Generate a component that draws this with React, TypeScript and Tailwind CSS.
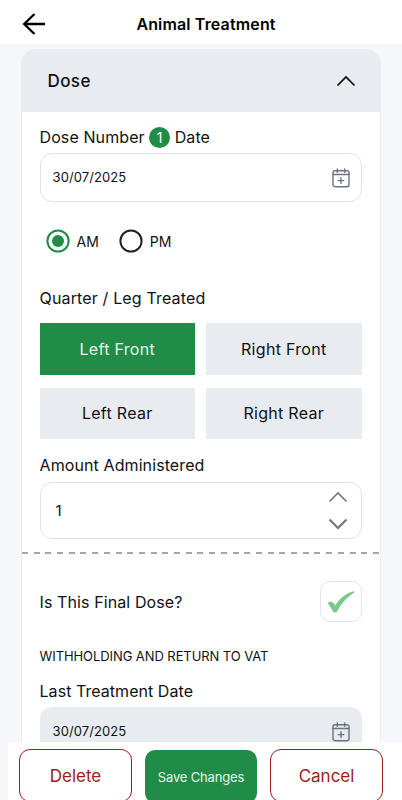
import { useState } from 'react';
import type { ReactNode } from 'react';

const quarters = ['Left Front', 'Right Front', 'Left Rear', 'Right Rear'];
const periods = ['AM', 'PM'];

function CalendarIcon() {
  return (
    <svg width="18" height="20" viewBox="0 0 18 20" fill="none" stroke="#6b7280" strokeWidth="1.4" strokeLinecap="round">
      <rect x="1" y="2.7" width="16" height="16" rx="2" />
      <path d="M1 6.5h16M5.3 1v3.4M12.7 1v3.4M9 9.8v5.6M6.2 12.6h5.6" />
    </svg>
  );
}

function Chevron({ up, className, width = 1.6 }: { up?: boolean; className?: string; width?: number }) {
  return (
    <svg width="20" height="12" viewBox="0 0 20 12" fill="none" stroke="currentColor" strokeWidth={width} className={className}>
      <path d={up ? 'M1.5 10.5 10 2l8.5 8.5' : 'M1.5 1.5 10 10l8.5-8.5'} />
    </svg>
  );
}

function Label({ children }: { children: ReactNode }) {
  return <div className="flex h-6 items-center whitespace-nowrap text-[16px] tracking-[0.1px]">{children}</div>;
}

export default function App() {
  const [quarter, setQuarter] = useState('Left Front');
  const [period, setPeriod] = useState('AM');
  const [amount, setAmount] = useState(1);

  return (
    <div className="flex h-[800px] w-[402px] flex-col overflow-hidden bg-[#f5f7fa] font-['Inter',sans-serif] text-[#111114]">
      <header className="grid h-11 shrink-0 grid-cols-[1fr_auto_1fr] items-center bg-white px-[22px] pt-1 text-black">
        <button aria-label="Back" className="w-6">
          <svg width="24" height="22" viewBox="0 0 24 22" fill="none" stroke="currentColor" strokeWidth="2.3">
            <path d="M12.5 1 2.2 11l10.3 10M2.2 11H23" />
          </svg>
        </button>
        <h1 className="mr-[-10px] text-[16px] font-semibold tracking-[0.15px]">Animal Treatment</h1>
      </header>

      <main className="min-h-0 flex-1 overflow-hidden pt-[5px] pr-[21px] pl-[20.5px]">
        <section className="rounded-t-[14px] border border-[#e8ebef] bg-white">
          <div className="flex h-[62px] items-center justify-between rounded-t-[13px] bg-[#e8ebf0] pr-[24.5px] pl-[26px]">
            <h2 className="pt-0.5 text-[17px] font-medium tracking-[0.4px]">Dose</h2>
            <Chevron up className="text-black" />
          </div>

          <div className="px-[18px] pt-[13px]">
            <Label>
              Dose Number
              <span className="mx-[4.5px] flex size-[21px] items-center justify-center rounded-full bg-[#218c48] text-[14px] text-white">1</span>
              Date
            </Label>
            <div className="mt-1 flex h-[49px] items-center justify-between rounded-xl border border-[#e2e2e4] pr-[11px] pl-3 text-[13px] tracking-[0.1px]">
              <span className="pt-px">30/07/2025</span>
              <CalendarIcon />
            </div>

            <div className="mt-[27px] ml-[6px] flex h-6 gap-5">
              {periods.map((p) => (
                <button key={p} onClick={() => setPeriod(p)} className="flex items-center gap-[7px] text-[14px]">
                  <svg width="24" height="24" viewBox="0 0 24 24" fill="none">
                    <circle cx="12" cy="12" r="10.6" strokeWidth="2" stroke={period === p ? '#218c48' : '#222226'} />
                    {period === p && <circle cx="12" cy="12" r="6" fill="#218c48" />}
                  </svg>
                  {p}
                </button>
              ))}
            </div>

            <div className="mt-[33px]">
              <Label>
                <span className="tracking-[0.15px]">Quarter / Leg Treated</span>
              </Label>
            </div>
            <div className="mt-[13px] grid grid-cols-[155.5px_156.5px] gap-x-[10.5px] gap-y-[13px]">
              {quarters.map((q) => (
                <button
                  key={q}
                  onClick={() => setQuarter(q)}
                  className={`h-[51.5px] text-[16px] tracking-[0.3px] ${quarter === q ? 'bg-[#218c48] text-[#e4f8e9]' : 'bg-[#e8ebf0]'}`}
                >
                  {q}
                </button>
              ))}
            </div>

            <div className="mt-[14px]">
              <Label>Amount Administered</Label>
            </div>
            <div className="mt-[5px] flex h-[57px] items-center justify-between rounded-xl border border-[#e2e2e4] pr-[13px] pl-[15px] text-[15px]">
              <span className="pt-0.5">{amount}</span>
              <div className="flex flex-col gap-[15px] text-[#74757a]">
                <button aria-label="Increase" onClick={() => setAmount(amount + 1)}>
                  <Chevron up />
                </button>
                <button aria-label="Decrease" onClick={() => setAmount(Math.max(0, amount - 1))}>
                  <Chevron width={2.2} />
                </button>
              </div>
            </div>
          </div>

          <div className="mt-[13px] h-[2px] bg-[repeating-linear-gradient(90deg,#a5a5a5_0_6px,transparent_6px_11.7px)]" />

          <div className="px-[18px] pt-[27px]">
            <div className="flex items-center justify-between">
              <Label>Is This Final Dose?</Label>
              <div className="flex h-[41px] w-[42px] items-center justify-center rounded-[10px] border border-[#e2e7e4]">
                <svg width="28" height="22" viewBox="0 0 28 22">
                  <path d="M.7 12c1.8-1.9 4.6-1.8 5.9.2l1.6 2.3C12 8.3 18.2 2.6 26.5.3l.9.9C20 6.2 14.9 11.7 9.9 20.7c-1 1-2.6 1-3.5.2C4.6 18.2 2.9 14.9.7 12z" fill="#7cc78c" />
                </svg>
              </div>
            </div>
            <h3 className="mt-[24px] text-[13px] leading-5 tracking-[-0.08px]">WITHHOLDING AND RETURN TO VAT</h3>
            <div className="mt-[13px]">
              <Label>
                <span className="tracking-[0.05px]">Last Treatment Date</span>
              </Label>
            </div>
            <div className="mt-[4px] flex h-[49px] items-center justify-between rounded-xl bg-[#e8ebf0] pr-3 pl-[13px] text-[13px] tracking-[0.1px]">
              <span className="pt-px">30/07/2025</span>
              <CalendarIcon />
            </div>
          </div>
        </section>
      </main>

      <footer className="ml-2 flex h-[58px] shrink-0 items-start gap-[13px] bg-white pt-[7px] pl-[11px]">
        <button className="h-[53px] w-[113px] shrink-0 rounded-[11px] border-[1.3px] border-[#9c1c20] pt-0.5 text-[17px] text-[#9c1c20]">Delete</button>
        <button className="mt-px h-[53px] w-[112px] shrink-0 rounded-[10px] bg-[#218c48] pt-0.5 text-[13px] tracking-[-0.15px] text-[#e4f8e9]">
          Save Changes
        </button>
        <button className="h-[53px] w-[113px] shrink-0 rounded-[11px] border-[1.3px] border-[#9c1c20] pt-0.5 text-[17px] text-[#9c1c20]">Cancel</button>
      </footer>
    </div>
  );
}
